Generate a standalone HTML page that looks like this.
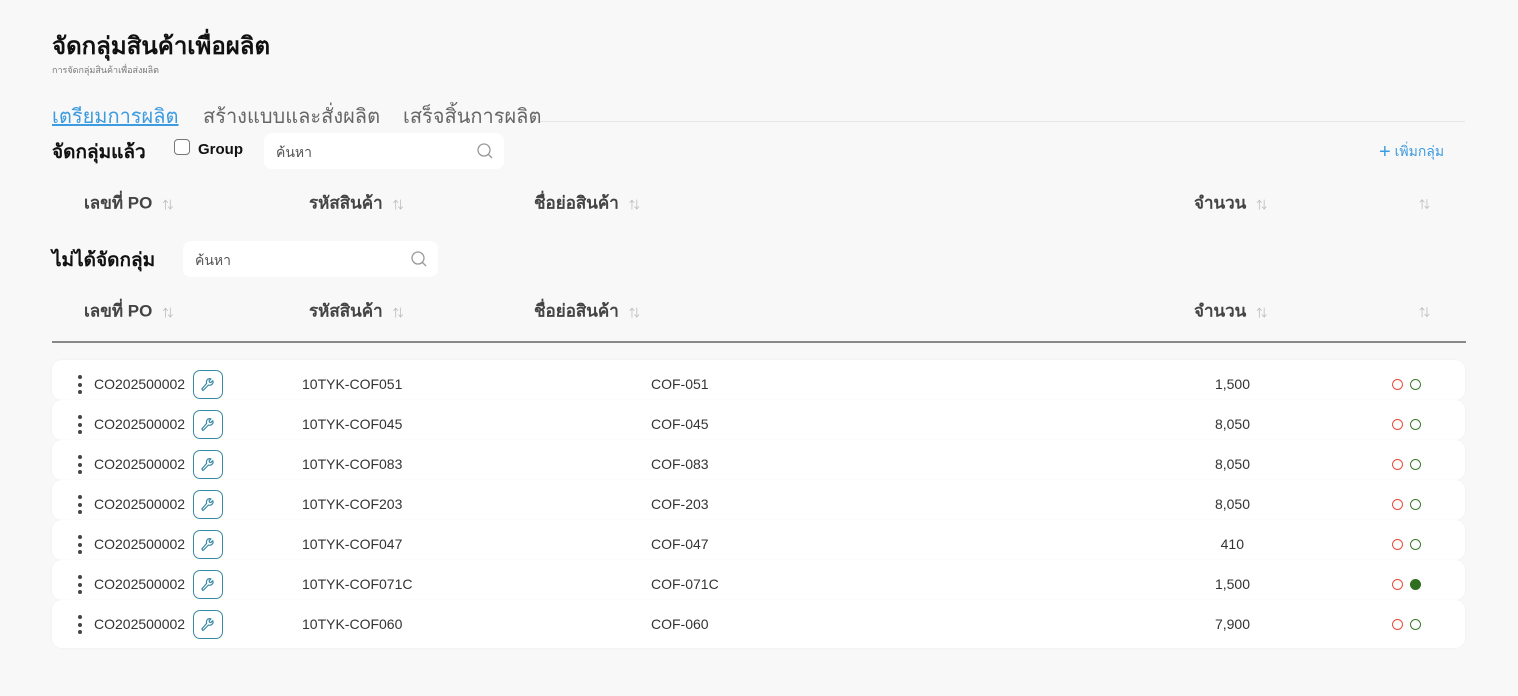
<!DOCTYPE html>
<html><head><meta charset="utf-8"><style>
*{box-sizing:border-box;margin:0;padding:0}
body{width:1518px;height:696px;background:#f8f8f8;font-family:"Liberation Sans","Noto Sans CJK SC",sans-serif;position:relative;overflow:hidden;color:#222}
.a{position:absolute;white-space:nowrap}
.th{font-size:17px;color:#444;font-weight:bold;transform:translateY(-50%)}
.sort{font-size:11px;color:#bbb;margin-left:10px;font-weight:normal}
.search{position:absolute;background:#fff;border-radius:8px;height:36px;font-size:14px;color:#555;padding:9px 12px}
.search svg{position:absolute;right:10px;top:9px}
.row{position:absolute;left:52px;width:1413px;height:40px;background:#fff;border-radius:10px;box-shadow:0 0 3px rgba(0,0,0,.04);font-size:14px;color:#333}
.row span{position:absolute;top:24px;transform:translateY(-50%)}
.d{position:absolute;left:26px;top:15px;width:4px;height:19px}
.d i{display:block;width:4px;height:4px;border-radius:50%;background:#444;margin-bottom:3.5px}
.w{position:absolute;left:141px;top:10px;width:30px;height:29px;border:1px solid #3a8aa6;border-radius:7px;background:#fff;z-index:2}
.w svg{position:absolute;left:6px;top:6px}
.c{position:absolute;top:19px;width:11px;height:11px;border-radius:50%}
</style></head><body>
<div class="a" style="left:52px;top:26px;font-size:24px;font-weight:bold;color:#111">จัดกลุ่มสินค้าเพื่อผลิต</div>
<div class="a" style="left:52px;top:63px;font-size:9px;color:#777">การจัดกลุ่มสินค้าเพื่อส่งผลิต</div>
<div class="a" style="left:540px;top:121px;width:925px;height:1px;background:#e6e6e6"></div>
<div class="a" style="left:52px;top:100px;font-size:20px;color:#3d9be0;text-decoration:underline">เตรียมการผลิต</div>
<div class="a" style="left:203px;top:100px;font-size:20px;color:#666">สร้างแบบและสั่งผลิต</div>
<div class="a" style="left:403px;top:100px;font-size:20px;color:#666">เสร็จสิ้นการผลิต</div>
<div class="a" style="left:52px;top:137px;font-size:19px;font-weight:bold;color:#111">จัดกลุ่มแล้ว</div>
<div class="a" style="left:174px;top:139px;width:16px;height:16px;border:1px solid #777;border-radius:4px;background:#fff"></div>
<div class="a" style="left:198px;top:141px;font-size:15px;font-weight:bold;color:#111">Group</div>
<div class="search" style="left:264px;top:133px;width:240px">ค้นหา<svg width="18" height="18" viewBox="0 0 18 18"><circle cx="8" cy="8" r="6" fill="none" stroke="#999" stroke-width="1.3"/><path d="M12.5 12.5L16 16" stroke="#999" stroke-width="1.3"/></svg></div>
<div class="a" style="left:1379px;top:141px;font-size:14px;color:#3d9be0"><span style="font-size:20px;line-height:14px;vertical-align:-2px">+</span> เพิ่มกลุ่ม</div>
<div class="a th" style="left:84px;top:203px">เลขที่ PO<span class="sort">⇅</span></div>
<div class="a th" style="left:309px;top:203px">รหัสสินค้า<span class="sort">⇅</span></div>
<div class="a th" style="left:534px;top:203px">ชื่อย่อสินค้า<span class="sort">⇅</span></div>
<div class="a th" style="left:1194px;top:203px">จำนวน<span class="sort">⇅</span></div>
<div class="a th" style="left:1409px;top:203px"><span class="sort">⇅</span></div>
<div class="a" style="left:52px;top:245px;font-size:19px;font-weight:bold;color:#111">ไม่ได้จัดกลุ่ม</div>
<div class="search" style="left:183px;top:241px;width:255px">ค้นหา<svg width="18" height="18" viewBox="0 0 18 18"><circle cx="8" cy="8" r="6" fill="none" stroke="#999" stroke-width="1.3"/><path d="M12.5 12.5L16 16" stroke="#999" stroke-width="1.3"/></svg></div>
<div class="a th" style="left:84px;top:311px">เลขที่ PO<span class="sort">⇅</span></div>
<div class="a th" style="left:309px;top:311px">รหัสสินค้า<span class="sort">⇅</span></div>
<div class="a th" style="left:534px;top:311px">ชื่อย่อสินค้า<span class="sort">⇅</span></div>
<div class="a th" style="left:1194px;top:311px">จำนวน<span class="sort">⇅</span></div>
<div class="a th" style="left:1409px;top:311px"><span class="sort">⇅</span></div>
<div class="a" style="left:52px;top:341px;width:1414px;height:2px;background:#888"></div>
<div class="row" style="top:360px"><div class="d"><i></i><i></i><i></i></div><span style="left:42px">CO202500002</span><div class="w"><svg width="16" height="16" viewBox="0 0 16 16"><path d="M3 13.5l5.5-5.5a3.3 3.3 0 0 0 4.3-4.3l-1.9 1.9-1.4-.4-.4-1.4 1.9-1.9A3.3 3.3 0 0 0 6.7 6.2L1.9 12l1.1 1.5z" fill="none" stroke="#3a8aa6" stroke-width="1.2" stroke-linejoin="round"/></svg></div><span style="left:250px">10TYK-COF051</span><span style="left:599px">COF-051</span><span style="right:215px">1,500</span><div class="c" style="left:1340px;border:1.3px solid #e84a3a"></div><div class="c" style="left:1358px;border:1.3px solid #3a7a2a"></div></div>
<div class="row" style="top:400px"><div class="d"><i></i><i></i><i></i></div><span style="left:42px">CO202500002</span><div class="w"><svg width="16" height="16" viewBox="0 0 16 16"><path d="M3 13.5l5.5-5.5a3.3 3.3 0 0 0 4.3-4.3l-1.9 1.9-1.4-.4-.4-1.4 1.9-1.9A3.3 3.3 0 0 0 6.7 6.2L1.9 12l1.1 1.5z" fill="none" stroke="#3a8aa6" stroke-width="1.2" stroke-linejoin="round"/></svg></div><span style="left:250px">10TYK-COF045</span><span style="left:599px">COF-045</span><span style="right:215px">8,050</span><div class="c" style="left:1340px;border:1.3px solid #e84a3a"></div><div class="c" style="left:1358px;border:1.3px solid #3a7a2a"></div></div>
<div class="row" style="top:440px"><div class="d"><i></i><i></i><i></i></div><span style="left:42px">CO202500002</span><div class="w"><svg width="16" height="16" viewBox="0 0 16 16"><path d="M3 13.5l5.5-5.5a3.3 3.3 0 0 0 4.3-4.3l-1.9 1.9-1.4-.4-.4-1.4 1.9-1.9A3.3 3.3 0 0 0 6.7 6.2L1.9 12l1.1 1.5z" fill="none" stroke="#3a8aa6" stroke-width="1.2" stroke-linejoin="round"/></svg></div><span style="left:250px">10TYK-COF083</span><span style="left:599px">COF-083</span><span style="right:215px">8,050</span><div class="c" style="left:1340px;border:1.3px solid #e84a3a"></div><div class="c" style="left:1358px;border:1.3px solid #3a7a2a"></div></div>
<div class="row" style="top:480px"><div class="d"><i></i><i></i><i></i></div><span style="left:42px">CO202500002</span><div class="w"><svg width="16" height="16" viewBox="0 0 16 16"><path d="M3 13.5l5.5-5.5a3.3 3.3 0 0 0 4.3-4.3l-1.9 1.9-1.4-.4-.4-1.4 1.9-1.9A3.3 3.3 0 0 0 6.7 6.2L1.9 12l1.1 1.5z" fill="none" stroke="#3a8aa6" stroke-width="1.2" stroke-linejoin="round"/></svg></div><span style="left:250px">10TYK-COF203</span><span style="left:599px">COF-203</span><span style="right:215px">8,050</span><div class="c" style="left:1340px;border:1.3px solid #e84a3a"></div><div class="c" style="left:1358px;border:1.3px solid #3a7a2a"></div></div>
<div class="row" style="top:520px"><div class="d"><i></i><i></i><i></i></div><span style="left:42px">CO202500002</span><div class="w"><svg width="16" height="16" viewBox="0 0 16 16"><path d="M3 13.5l5.5-5.5a3.3 3.3 0 0 0 4.3-4.3l-1.9 1.9-1.4-.4-.4-1.4 1.9-1.9A3.3 3.3 0 0 0 6.7 6.2L1.9 12l1.1 1.5z" fill="none" stroke="#3a8aa6" stroke-width="1.2" stroke-linejoin="round"/></svg></div><span style="left:250px">10TYK-COF047</span><span style="left:599px">COF-047</span><span style="right:221px">410</span><div class="c" style="left:1340px;border:1.3px solid #e84a3a"></div><div class="c" style="left:1358px;border:1.3px solid #3a7a2a"></div></div>
<div class="row" style="top:560px"><div class="d"><i></i><i></i><i></i></div><span style="left:42px">CO202500002</span><div class="w"><svg width="16" height="16" viewBox="0 0 16 16"><path d="M3 13.5l5.5-5.5a3.3 3.3 0 0 0 4.3-4.3l-1.9 1.9-1.4-.4-.4-1.4 1.9-1.9A3.3 3.3 0 0 0 6.7 6.2L1.9 12l1.1 1.5z" fill="none" stroke="#3a8aa6" stroke-width="1.2" stroke-linejoin="round"/></svg></div><span style="left:250px">10TYK-COF071C</span><span style="left:599px">COF-071C</span><span style="right:215px">1,500</span><div class="c" style="left:1340px;border:1.3px solid #e84a3a"></div><div class="c" style="left:1358px;background:#2e6e1e"></div></div>
<div class="row" style="top:600px;height:48px"><div class="d"><i></i><i></i><i></i></div><span style="left:42px">CO202500002</span><div class="w"><svg width="16" height="16" viewBox="0 0 16 16"><path d="M3 13.5l5.5-5.5a3.3 3.3 0 0 0 4.3-4.3l-1.9 1.9-1.4-.4-.4-1.4 1.9-1.9A3.3 3.3 0 0 0 6.7 6.2L1.9 12l1.1 1.5z" fill="none" stroke="#3a8aa6" stroke-width="1.2" stroke-linejoin="round"/></svg></div><span style="left:250px">10TYK-COF060</span><span style="left:599px">COF-060</span><span style="right:215px">7,900</span><div class="c" style="left:1340px;border:1.3px solid #e84a3a"></div><div class="c" style="left:1358px;border:1.3px solid #3a7a2a"></div></div>
</body></html>
